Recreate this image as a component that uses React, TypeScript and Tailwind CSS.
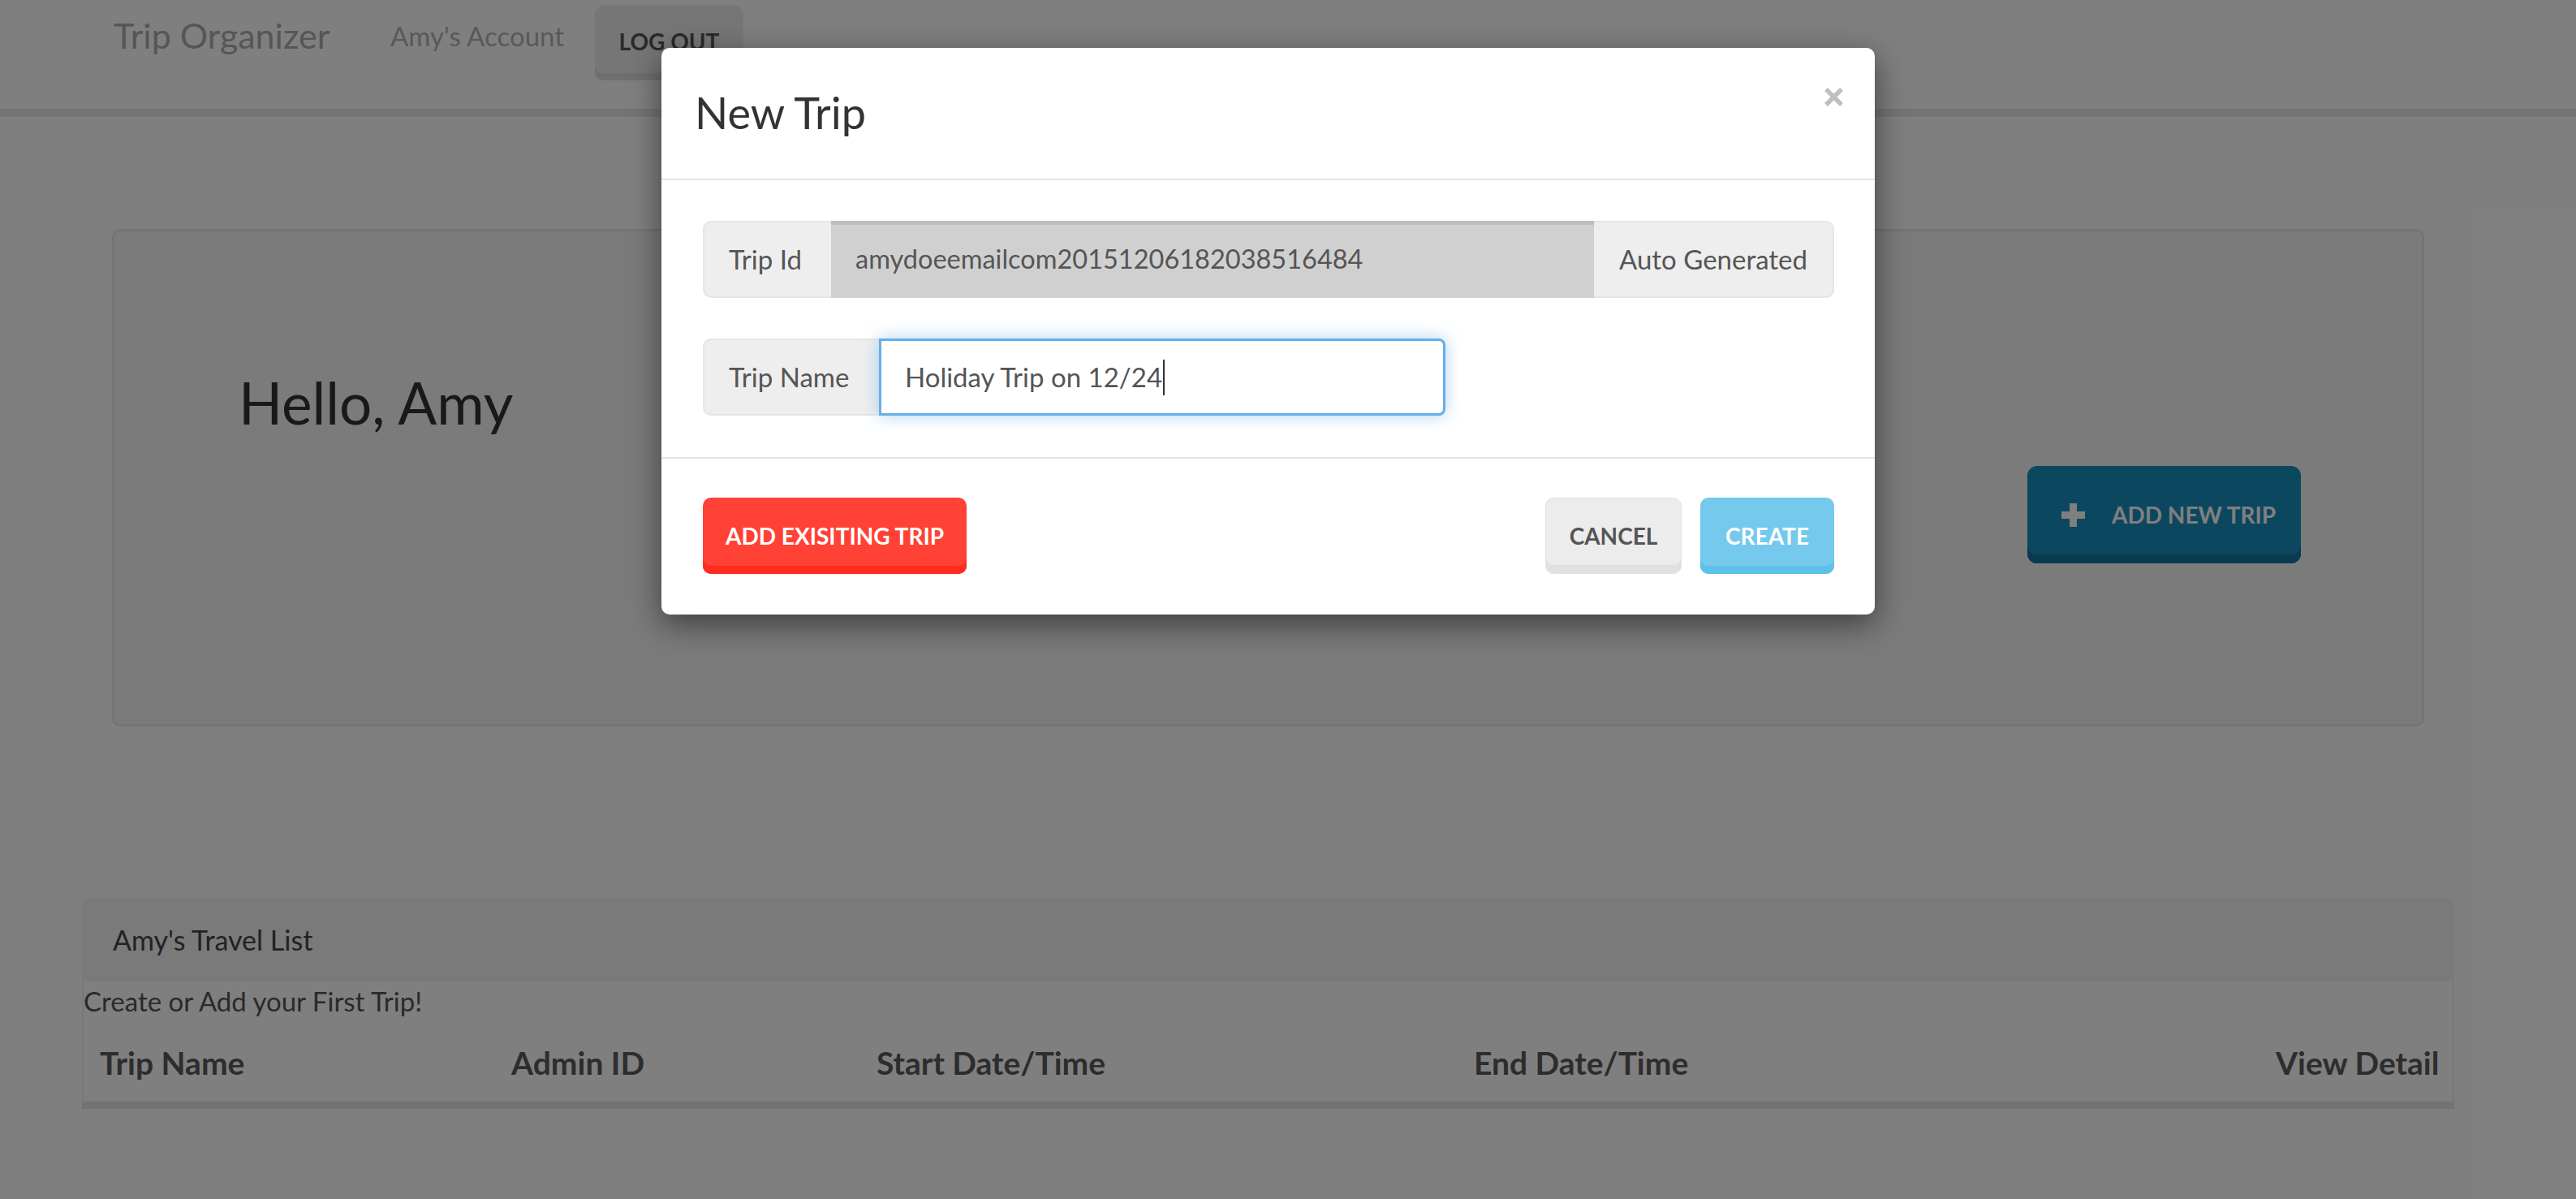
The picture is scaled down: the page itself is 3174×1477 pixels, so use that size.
export default function App() {
  return (
    <div className="relative min-h-screen w-[3174px] h-[1477px] overflow-hidden bg-white font-['Lato',sans-serif]">
      {/* Navbar */}
      <nav className="h-[144px] border-b-[10px] border-[#e8e8e8] bg-white flex items-start pl-[140px]">
        <div className="w-[341px] mt-[22px] text-[43px] leading-none text-[#acacac]">Trip Organizer</div>
        <div className="w-[252px] mt-[28px] text-[33px] leading-none text-[#b2b2b2]">Amy's Account</div>
        <button className="mt-[7px] w-[183px] h-[92px] rounded-[10px] bg-[#ececec] shadow-[inset_0_-9px_0_#dedede] text-[28px] font-bold leading-none text-[#555] uppercase pb-[4px]">
          Log out
        </button>
      </nav>

      {/* Jumbotron */}
      <div className="mt-[138px] ml-[138px] w-[2849px] h-[613px] rounded-[10px] border-[3px] border-[#e8e8e8] bg-[#f6f6f6] flex justify-between items-start pl-[153px] pr-[149px]">
        <h1 className="mt-[175px] text-[71px] leading-none font-normal text-[#333]">Hello, Amy</h1>
        <button className="mt-[289px] w-[337px] h-[120px] rounded-[12px] bg-[#188ec0] shadow-[inset_0_-11px_0_#1474a0] flex items-center pl-[42px] text-white">
          <svg width="29" height="29" viewBox="0 0 29 29" className="mr-[33px]">
            <rect x="10" y="0" width="9" height="29" fill="currentColor" />
            <rect x="0" y="10" width="29" height="9" fill="currentColor" />
          </svg>
          <span className="text-[28px] font-bold leading-none uppercase">Add New Trip</span>
        </button>
      </div>

      {/* Travel list */}
      <div className="mt-[212px] ml-[101px] w-[2923px] rounded-t-[8px] border-x-2 border-t-2 border-[#f2f2f2] shadow-[0_9px_0_#e6e6e6] bg-white">
        <div className="h-[100px] bg-[#f5f5f5] pl-[36px] pt-[32px] text-[34px] leading-none text-[#444]">Amy's Travel List</div>
        <div className="mt-[8px] text-[33px] leading-none text-[#555]">Create or Add your First Trip!</div>
        <div className="mt-[40px] h-[67px] grid grid-cols-[507px_450px_736px_988px_auto] pl-[20px] text-[39px] font-bold leading-none text-[#5a5a5a]">
          <div>Trip Name</div>
          <div>Admin ID</div>
          <div>Start Date/Time</div>
          <div>End Date/Time</div>
          <div>View Detail</div>
        </div>
      </div>

      {/* Backdrop */}
      <div className="absolute inset-0 bg-black/50" />

      {/* Modal */}
      <div className="absolute left-[815px] top-[59px] w-[1495px] rounded-[10px] bg-white shadow-[0_12px_38px_rgba(0,0,0,0.5)]">
        <div className="h-[163px] border-b-2 border-[#e5e5e5] flex justify-between items-start pl-[41px] pr-[39px]">
          <h4 className="mt-[53px] text-[54px] leading-none font-normal text-[#333]">New Trip</h4>
          <svg width="23" height="23" viewBox="0 0 23 23" className="mt-[49px]">
            <path d="M2 2 L21 21 M21 2 L2 21" stroke="#bfbfbf" strokeWidth="5.5" />
          </svg>
        </div>

        <div className="pt-[50px] pb-[51px] pl-[51px] pr-[50px]">
          <div className="flex h-[95px] text-[33px] leading-none text-[#555]">
            <div className="w-[158px] flex items-center pl-[30px] bg-[#eeeeee] border-2 border-r-0 border-[#e5e5e5] rounded-l-[10px]">Trip Id</div>
            <div className="w-[940px] flex items-center pl-[30px] bg-[#d0d0d0] shadow-[inset_0_5px_0_#bdbdbd] text-[32.5px]">amydoeemailcom20151206182038516484</div>
            <div className="flex-1 flex items-center pl-[31px] bg-[#eeeeee] border-2 border-l-0 border-[#e5e5e5] rounded-r-[10px]">Auto Generated</div>
          </div>
          <div className="mt-[50px] flex h-[95px] text-[33px] leading-none text-[#555]">
            <div className="w-[217px] flex items-center pl-[30px] bg-[#eeeeee] border-2 border-r-0 border-[#e5e5e5] rounded-l-[10px]">Trip Name</div>
            <div className="w-[698px] flex items-center pl-[29px] bg-white border-[3px] border-[#66afe9] rounded-r-[8px] shadow-[0_0_20px_rgba(102,175,233,0.55)]">
              <span>Holiday Trip on 12/24</span>
              <span className="ml-[1px] w-[2px] h-[44px] bg-[#333]" />
            </div>
          </div>
        </div>

        <div className="border-t-2 border-[#e5e5e5] pt-[48px] pb-[50px] pl-[51px] pr-[50px] flex items-center">
          <button className="w-[325px] h-[94px] rounded-[10px] bg-[#ff4136] shadow-[inset_0_-10px_0_#ff2b20] text-white text-[28px] font-bold leading-none uppercase">Add Exisiting Trip</button>
          <div className="flex-1" />
          <button className="w-[168px] h-[94px] rounded-[10px] bg-[#ececec] border border-[#e2e2e2] shadow-[inset_0_-10px_0_#e0e0e0] text-[#555] text-[28px] font-bold leading-none uppercase">Cancel</button>
          <button className="ml-[23px] w-[165px] h-[94px] rounded-[10px] bg-[#74c9ec] shadow-[inset_0_-10px_0_#5fc0e8] text-white text-[28px] font-bold leading-none uppercase">Create</button>
        </div>
      </div>
    </div>
  );
}
